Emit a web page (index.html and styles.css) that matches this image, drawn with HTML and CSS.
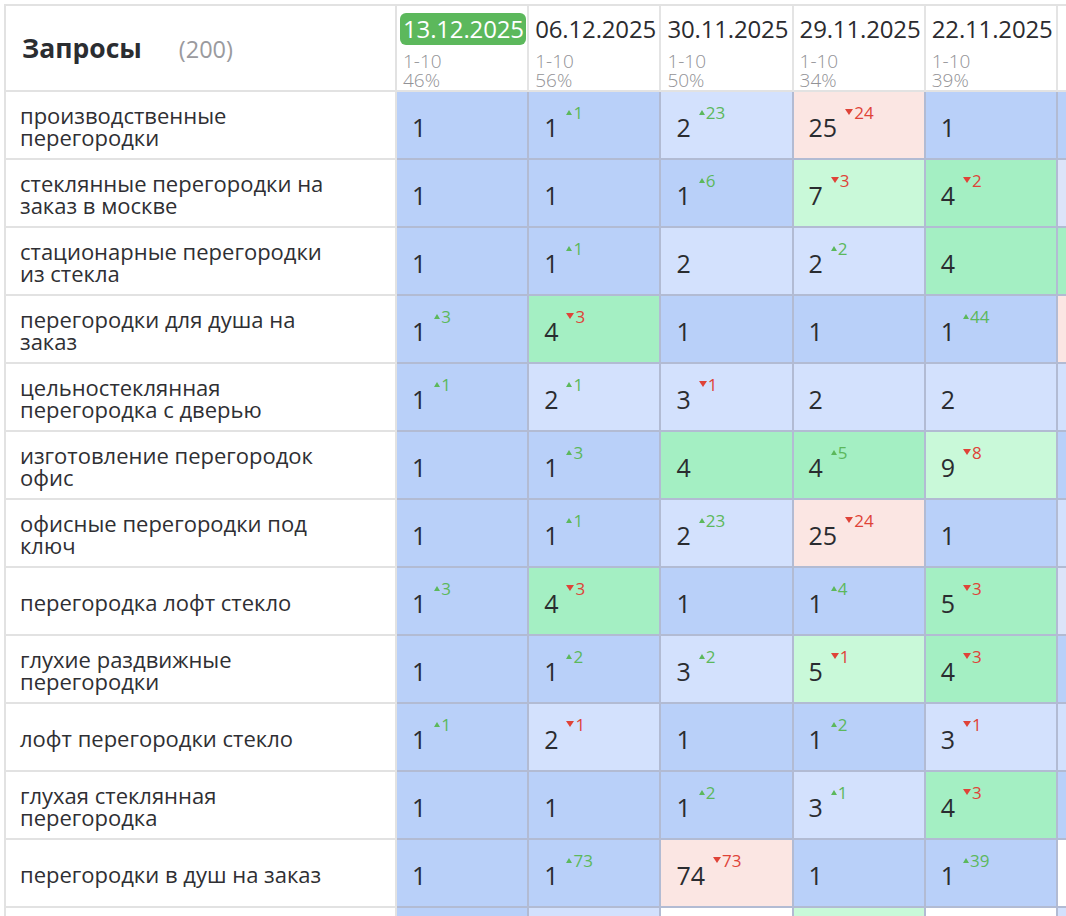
FILE: index.html
```html
<!DOCTYPE html>
<html lang="ru">
<head>
<meta charset="utf-8">
<title>Запросы</title>
<link rel="stylesheet" href="styles.css">
</head>
<body>
<div class="viewport">
<table class="grid">
<colgroup>
<col class="col-q"><col class="col-d"><col class="col-d"><col class="col-d"><col class="col-d"><col class="col-d"><col class="col-d">
</colgroup>
<thead>
<tr>
<th class="qh"><span class="title">Запросы</span><span class="count">(200)</span></th>
<th class="dh"><span class="date now">13.12.2025</span><div class="meta">1-10<br>46%</div></th>
<th class="dh"><span class="date">06.12.2025</span><div class="meta">1-10<br>56%</div></th>
<th class="dh"><span class="date">30.11.2025</span><div class="meta">1-10<br>50%</div></th>
<th class="dh"><span class="date">29.11.2025</span><div class="meta">1-10<br>34%</div></th>
<th class="dh"><span class="date">22.11.2025</span><div class="meta">1-10<br>39%</div></th>
<th class="dh"></th>
</tr>
</thead>
<tbody>
<tr>
<td class="q">производственные<br>перегородки</td>
<td class="c b"><div class="in"><span class="v">1</span></div></td>
<td class="c b"><div class="in"><span class="v">1</span><span class="d up">1</span></div></td>
<td class="c lb"><div class="in"><span class="v">2</span><span class="d up">23</span></div></td>
<td class="c p"><div class="in"><span class="v">25</span><span class="d dn">24</span></div></td>
<td class="c b"><div class="in"><span class="v">1</span></div></td>
<td class="c b"></td>
</tr>
<tr>
<td class="q">стеклянные перегородки на<br>заказ в москве</td>
<td class="c b"><div class="in"><span class="v">1</span></div></td>
<td class="c b"><div class="in"><span class="v">1</span></div></td>
<td class="c b"><div class="in"><span class="v">1</span><span class="d up">6</span></div></td>
<td class="c lg"><div class="in"><span class="v">7</span><span class="d dn">3</span></div></td>
<td class="c g"><div class="in"><span class="v">4</span><span class="d dn">2</span></div></td>
<td class="c lv"></td>
</tr>
<tr>
<td class="q">стационарные перегородки<br>из стекла</td>
<td class="c b"><div class="in"><span class="v">1</span></div></td>
<td class="c b"><div class="in"><span class="v">1</span><span class="d up">1</span></div></td>
<td class="c lb"><div class="in"><span class="v">2</span></div></td>
<td class="c lb"><div class="in"><span class="v">2</span><span class="d up">2</span></div></td>
<td class="c g"><div class="in"><span class="v">4</span></div></td>
<td class="c g"></td>
</tr>
<tr>
<td class="q">перегородки для душа на<br>заказ</td>
<td class="c b"><div class="in"><span class="v">1</span><span class="d up">3</span></div></td>
<td class="c g"><div class="in"><span class="v">4</span><span class="d dn">3</span></div></td>
<td class="c b"><div class="in"><span class="v">1</span></div></td>
<td class="c b"><div class="in"><span class="v">1</span></div></td>
<td class="c b"><div class="in"><span class="v">1</span><span class="d up">44</span></div></td>
<td class="c p"></td>
</tr>
<tr>
<td class="q">цельностеклянная<br>перегородка с дверью</td>
<td class="c b"><div class="in"><span class="v">1</span><span class="d up">1</span></div></td>
<td class="c lb"><div class="in"><span class="v">2</span><span class="d up">1</span></div></td>
<td class="c lb"><div class="in"><span class="v">3</span><span class="d dn">1</span></div></td>
<td class="c lb"><div class="in"><span class="v">2</span></div></td>
<td class="c lb"><div class="in"><span class="v">2</span></div></td>
<td class="c lb"></td>
</tr>
<tr>
<td class="q">изготовление перегородок<br>офис</td>
<td class="c b"><div class="in"><span class="v">1</span></div></td>
<td class="c b"><div class="in"><span class="v">1</span><span class="d up">3</span></div></td>
<td class="c g"><div class="in"><span class="v">4</span></div></td>
<td class="c g"><div class="in"><span class="v">4</span><span class="d up">5</span></div></td>
<td class="c lg"><div class="in"><span class="v">9</span><span class="d dn">8</span></div></td>
<td class="c b"></td>
</tr>
<tr>
<td class="q">офисные перегородки под<br>ключ</td>
<td class="c b"><div class="in"><span class="v">1</span></div></td>
<td class="c b"><div class="in"><span class="v">1</span><span class="d up">1</span></div></td>
<td class="c lb"><div class="in"><span class="v">2</span><span class="d up">23</span></div></td>
<td class="c p"><div class="in"><span class="v">25</span><span class="d dn">24</span></div></td>
<td class="c b"><div class="in"><span class="v">1</span></div></td>
<td class="c lb"></td>
</tr>
<tr>
<td class="q">перегородка лофт стекло</td>
<td class="c b"><div class="in"><span class="v">1</span><span class="d up">3</span></div></td>
<td class="c g"><div class="in"><span class="v">4</span><span class="d dn">3</span></div></td>
<td class="c b"><div class="in"><span class="v">1</span></div></td>
<td class="c b"><div class="in"><span class="v">1</span><span class="d up">4</span></div></td>
<td class="c g"><div class="in"><span class="v">5</span><span class="d dn">3</span></div></td>
<td class="c lv"></td>
</tr>
<tr>
<td class="q">глухие раздвижные<br>перегородки</td>
<td class="c b"><div class="in"><span class="v">1</span></div></td>
<td class="c b"><div class="in"><span class="v">1</span><span class="d up">2</span></div></td>
<td class="c lb"><div class="in"><span class="v">3</span><span class="d up">2</span></div></td>
<td class="c lg"><div class="in"><span class="v">5</span><span class="d dn">1</span></div></td>
<td class="c g"><div class="in"><span class="v">4</span><span class="d dn">3</span></div></td>
<td class="c b"></td>
</tr>
<tr>
<td class="q">лофт перегородки стекло</td>
<td class="c b"><div class="in"><span class="v">1</span><span class="d up">1</span></div></td>
<td class="c lb"><div class="in"><span class="v">2</span><span class="d dn">1</span></div></td>
<td class="c b"><div class="in"><span class="v">1</span></div></td>
<td class="c b"><div class="in"><span class="v">1</span><span class="d up">2</span></div></td>
<td class="c lb"><div class="in"><span class="v">3</span><span class="d dn">1</span></div></td>
<td class="c lb"></td>
</tr>
<tr>
<td class="q">глухая стеклянная<br>перегородка</td>
<td class="c b"><div class="in"><span class="v">1</span></div></td>
<td class="c b"><div class="in"><span class="v">1</span></div></td>
<td class="c b"><div class="in"><span class="v">1</span><span class="d up">2</span></div></td>
<td class="c lb"><div class="in"><span class="v">3</span><span class="d up">1</span></div></td>
<td class="c g"><div class="in"><span class="v">4</span><span class="d dn">3</span></div></td>
<td class="c b"></td>
</tr>
<tr>
<td class="q">перегородки в душ на заказ</td>
<td class="c b"><div class="in"><span class="v">1</span></div></td>
<td class="c b"><div class="in"><span class="v">1</span><span class="d up">73</span></div></td>
<td class="c p"><div class="in"><span class="v">74</span><span class="d dn">73</span></div></td>
<td class="c b"><div class="in"><span class="v">1</span></div></td>
<td class="c b"><div class="in"><span class="v">1</span><span class="d up">39</span></div></td>
<td class="c w"></td>
</tr>
<tr>
<td class="q"></td>
<td class="c b"></td>
<td class="c lb"></td>
<td class="c w"></td>
<td class="c lg"></td>
<td class="c w"></td>
<td class="c lb"></td>
</tr>
</tbody>
</table>
</div>
</body>
</html>
```
FILE: styles.css
```css
* {
  box-sizing: border-box;
}

html,
body {
  margin: 0;
  padding: 0;
  background: #ffffff;
}

body {
  font-family: "Open Sans", "Noto Sans", sans-serif;
  color: #2f2f33;
  width: 1066px;
  height: 916px;
  overflow: hidden;
}

.viewport {
  width: 1066px;
  height: 916px;
  overflow: hidden;
  padding: 4px 0 0 4px;
}

.grid {
  border-collapse: separate;
  border-spacing: 0;
  table-layout: fixed;
  width: 1186px;
  border-top: 2px solid #e2e2e2;
  border-left: 2px solid #e2e2e2;
}

.col-q {
  width: 391px;
}

.col-d {
  width: 132.2px;
}

/* header */
.qh {
  height: 86px;
  padding: 0 0 0 16px;
  text-align: left;
  vertical-align: middle;
  border-right: 2px solid #e2e2e2;
  border-bottom: 2px solid #e2e2e2;
  white-space: nowrap;
}

.title {
  font-size: 26.5px;
  font-weight: 700;
  color: #2b2d31;
}

.count {
  font-size: 23.5px;
  font-weight: 400;
  color: #9a9a9e;
  margin-left: 37px;
}

.dh {
  height: 86px;
  padding: 7px 0 0 6px;
  text-align: left;
  vertical-align: top;
  font-weight: 400;
  border-right: 2px solid #e4e4e4;
  border-bottom: 2px solid #e2e2e2;
  white-space: nowrap;
  overflow: hidden;
}

.date {
  display: inline-block;
  font-size: 24px;
  line-height: 32px;
  color: #2b2b2f;
  letter-spacing: -0.15px;
}

.date.now {
  background: #5cb85c;
  color: #ffffff;
  border-radius: 6px;
  margin-left: -3px;
  padding: 0 2px 0 3px;
}

.meta {
  font-size: 19px;
  font-weight: 300;
  line-height: 19px;
  color: #929296;
  margin-top: 7px;
}

/* body rows */
.q {
  height: 68px;
  padding: 2px 0 0 14px;
  font-size: 22px;
  line-height: 22px;
  color: #2f2f33;
  vertical-align: middle;
  border-right: 2px solid #e2e2e2;
  border-bottom: 2px solid #e2e2e2;
}

.c {
  height: 68px;
  padding: 3px 0 0 15px;
  vertical-align: middle;
  white-space: nowrap;
  overflow: hidden;
  border-right: 2px solid #b2bbd3;
  border-bottom: 2px solid #b2bbd3;
}

.in {
  display: flex;
  align-items: flex-start;
  height: 30px;
}

.v {
  font-size: 25px;
  line-height: 30px;
  color: #2a2c30;
}

.d {
  display: flex;
  align-items: flex-start;
  font-size: 17px;
  line-height: 17px;
  margin-top: -8px;
  margin-left: 8px;
}

.d::before {
  content: "";
  width: 0;
  height: 0;
  border-style: solid;
}

.up {
  color: #5cb85c;
}

.up::before {
  border-width: 0 3px 5px 3px;
  border-color: transparent transparent currentColor transparent;
  margin: 6px 1px 0 0;
}

.dn {
  color: #df4338;
}

.dn::before {
  border-width: 6px 4.5px 0 4.5px;
  border-color: currentColor transparent transparent transparent;
  margin: 5px 1px 0 0;
}

.b {
  background: #b9d0f9;
}

.lb {
  background: #d3e1fd;
}

.lv {
  background: #dce4f9;
}

.g {
  background: #a4efc3;
}

.lg {
  background: #c9f9d9;
}

.p {
  background: #fbe6e3;
}

.w {
  background: #ffffff;
}
```
